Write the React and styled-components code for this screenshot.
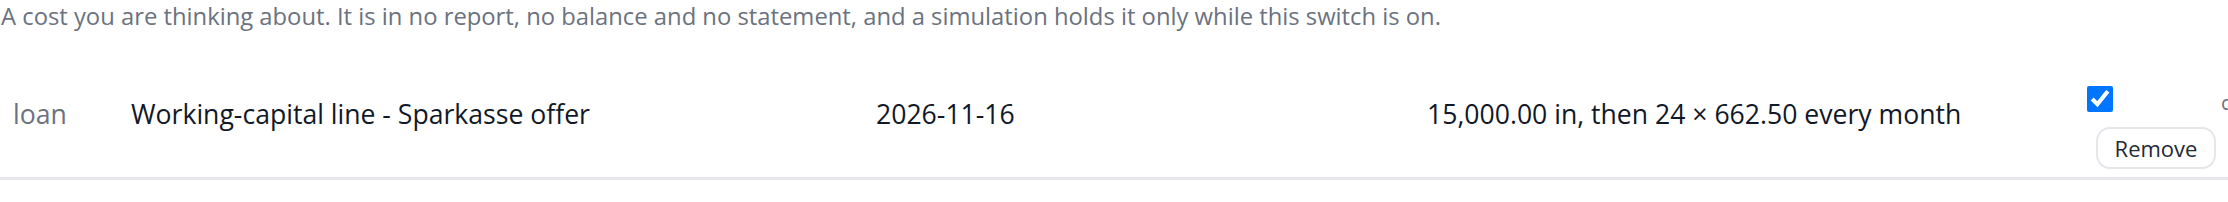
import styled, { createGlobalStyle } from "styled-components";

const GlobalStyle = createGlobalStyle`
  html, body {
    margin: 0;
    padding: 0;
    background: #ffffff;
    overflow: hidden;
  }

  body {
    font-family: "Open Sans", "Noto Sans", sans-serif;
    color: #1f2937;
  }
`;

const Page = styled.div`
  width: 2228px;
  height: 202px;
  overflow: hidden;
`;

const Description = styled.p`
  margin: 0;
  padding: 0 0 0 1px;
  font-size: 23.8px;
  line-height: 33px;
  color: #6b7280;
  white-space: nowrap;
`;

const Table = styled.table`
  border-collapse: collapse;
  margin-top: 43px;
  table-layout: fixed;
  width: 2420px;
`;

const Col = styled.col`
  width: ${({ $w }) => $w}px;
`;

const Row = styled.tr`
  border-bottom: 3px solid #e5e7eb;
`;

const Cell = styled.td`
  box-sizing: border-box;
  padding: 18px 13px 0;
  font-size: 26.6px;
  line-height: 40px;
  vertical-align: top;
  white-space: nowrap;
  color: ${({ $muted }) => ($muted ? "#6b7280" : "#111827")};
`;

const ActionCell = styled.td`
  box-sizing: border-box;
  padding: 10px 0 8px 13px;
  vertical-align: top;
`;

const ToggleLine = styled.div`
  display: flex;
  align-items: center;
  height: 26px;
`;

const Toggle = styled.input`
  width: 26px;
  height: 26px;
  margin: 0;
`;

const ToggleNote = styled.span`
  margin: 8px 0 0 108px;
  font-size: 20px;
  line-height: 26px;
  color: #6b7280;
  white-space: nowrap;
`;

const RemoveButton = styled.button`
  display: block;
  box-sizing: border-box;
  margin: 15px 0 0 9px;
  width: 120px;
  height: 42px;
  border: 2px solid #e5e7eb;
  border-radius: 14px;
  background: #ffffff;
  font-family: "Open Sans", "Noto Sans", sans-serif;
  font-size: 22px;
  color: #1f2937;
  cursor: pointer;
  padding: 0;
`;

const item = {
  kind: "loan",
  name: "Working-capital line - Sparkasse offer",
  date: "2026-11-16",
  terms: "15,000.00 in, then 24 × 662.50 every month",
};

export default function App() {
  return (
    <Page>
      <GlobalStyle />
      <Description>
        A cost you are thinking about. It is in no report, no balance and no statement, and a simulation holds it only while this switch is on.
      </Description>
      <Table>
        <colgroup>
          <Col $w={118} />
          <Col $w={745} />
          <Col $w={551} />
          <Col $w={660} />
          <Col $w={246} />
          <Col $w={100} />
        </colgroup>
        <tbody>
          <Row>
            <Cell $muted>{item.kind}</Cell>
            <Cell>{item.name}</Cell>
            <Cell>{item.date}</Cell>
            <Cell>{item.terms}</Cell>
            <ActionCell>
              <ToggleLine>
                <Toggle type="checkbox" defaultChecked aria-label="Include in simulation" />
                <ToggleNote>counts</ToggleNote>
              </ToggleLine>
              <RemoveButton type="button">Remove</RemoveButton>
            </ActionCell>
            <Cell />
          </Row>
        </tbody>
      </Table>
    </Page>
  );
}
